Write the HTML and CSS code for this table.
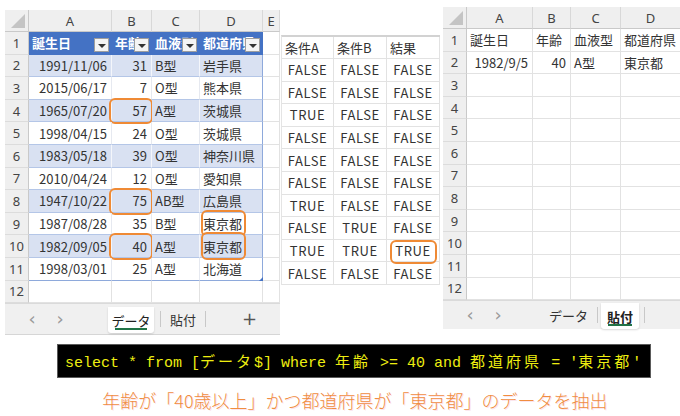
FILE: index.html
```html
<!DOCTYPE html>
<html lang="ja">
<head>
<meta charset="utf-8">
<title>Excel SQL</title>
<link rel="stylesheet" href="styles.css">
</head>
<body>
<div class="top">
  <div class="book book-left">
    <div class="grid grid-left">
      <div class="ch corner"><span class="tri"></span></div>
      <div class="ch">A</div><div class="ch">B</div><div class="ch">C</div><div class="ch">D</div><div class="ch">E</div>

      <div class="rh">1</div>
      <div class="c th">誕生日<span class="fb"></span></div>
      <div class="c th">年齢<span class="fb"></span></div>
      <div class="c th">血液型<span class="fb"></span></div>
      <div class="c th last">都道府県<span class="fb"></span></div>
      <div class="c"></div>

      <div class="rh">2</div>
      <div class="c t band r">1991/11/06</div><div class="c t band r">31</div><div class="c t band">B型</div><div class="c t band last">岩手県</div><div class="c"></div>
      <div class="rh">3</div>
      <div class="c t r">2015/06/17</div><div class="c t r">7</div><div class="c t">O型</div><div class="c t last">熊本県</div><div class="c"></div>
      <div class="rh">4</div>
      <div class="c t band r">1965/07/20</div><div class="c t band r">57<span class="mark mark-cell"></span></div><div class="c t band">A型</div><div class="c t band last">茨城県</div><div class="c"></div>
      <div class="rh">5</div>
      <div class="c t r">1998/04/15</div><div class="c t r">24</div><div class="c t">O型</div><div class="c t last">茨城県</div><div class="c"></div>
      <div class="rh">6</div>
      <div class="c t band r">1983/05/18</div><div class="c t band r">39</div><div class="c t band">O型</div><div class="c t band last">神奈川県</div><div class="c"></div>
      <div class="rh">7</div>
      <div class="c t r">2010/04/24</div><div class="c t r">12</div><div class="c t">O型</div><div class="c t last">愛知県</div><div class="c"></div>
      <div class="rh">8</div>
      <div class="c t band r">1947/10/22</div><div class="c t band r">75<span class="mark mark-cell"></span></div><div class="c t band">AB型</div><div class="c t band last">広島県</div><div class="c"></div>
      <div class="rh">9</div>
      <div class="c t r">1987/08/28</div><div class="c t r">35</div><div class="c t">B型</div><div class="c t last">東京都<span class="mark mark-text"></span></div><div class="c"></div>
      <div class="rh">10</div>
      <div class="c t band r">1982/09/05</div><div class="c t band r">40<span class="mark mark-cell"></span></div><div class="c t band">A型</div><div class="c t band last">東京都<span class="mark mark-text"></span></div><div class="c"></div>
      <div class="rh">11</div>
      <div class="c t r bot">1998/03/01</div><div class="c t r bot">25</div><div class="c t bot">A型</div><div class="c t last bot">北海道<span class="handle"></span></div><div class="c"></div>
      <div class="rh">12</div>
      <div class="c"></div><div class="c"></div><div class="c"></div><div class="c"></div><div class="c"></div>
    </div>
    <div class="tabs tabs-left">
      <span class="arr a1">&lsaquo;</span>
      <span class="arr a2">&rsaquo;</span>
      <span class="tab active l-active">データ</span>
      <span class="sep s1"></span>
      <span class="tab l-second">貼付</span>
      <span class="sep s2"></span>
      <span class="plus">+</span>
    </div>
  </div>

  <div class="cond">
    <div class="grid grid-mid">
      <div class="mh">条件A</div><div class="mh">条件B</div><div class="mh">結果</div>
      <div class="v">FALSE</div><div class="v">FALSE</div><div class="v">FALSE</div>
      <div class="v">FALSE</div><div class="v">FALSE</div><div class="v">FALSE</div>
      <div class="v">TRUE</div><div class="v">FALSE</div><div class="v">FALSE</div>
      <div class="v">FALSE</div><div class="v">FALSE</div><div class="v">FALSE</div>
      <div class="v">FALSE</div><div class="v">FALSE</div><div class="v">FALSE</div>
      <div class="v">FALSE</div><div class="v">FALSE</div><div class="v">FALSE</div>
      <div class="v">TRUE</div><div class="v">FALSE</div><div class="v">FALSE</div>
      <div class="v">FALSE</div><div class="v">TRUE</div><div class="v">FALSE</div>
      <div class="v">TRUE</div><div class="v">TRUE</div><div class="v">TRUE<span class="mark mark-mid"></span></div>
      <div class="v">FALSE</div><div class="v">FALSE</div><div class="v">FALSE</div>
    </div>
  </div>

  <div class="book book-right">
    <div class="grid grid-right">
      <div class="ch corner"><span class="tri"></span></div>
      <div class="ch">A</div><div class="ch">B</div><div class="ch">C</div><div class="ch">D</div>
      <div class="rh">1</div>
      <div class="c">誕生日</div><div class="c">年齢</div><div class="c">血液型</div><div class="c">都道府県</div>
      <div class="rh">2</div>
      <div class="c r">1982/9/5</div><div class="c r">40</div><div class="c">A型</div><div class="c">東京都</div>
      <div class="rh">3</div><div class="c"></div><div class="c"></div><div class="c"></div><div class="c"></div>
      <div class="rh">4</div><div class="c"></div><div class="c"></div><div class="c"></div><div class="c"></div>
      <div class="rh">5</div><div class="c"></div><div class="c"></div><div class="c"></div><div class="c"></div>
      <div class="rh">6</div><div class="c"></div><div class="c"></div><div class="c"></div><div class="c"></div>
      <div class="rh">7</div><div class="c"></div><div class="c"></div><div class="c"></div><div class="c"></div>
      <div class="rh">8</div><div class="c"></div><div class="c"></div><div class="c"></div><div class="c"></div>
      <div class="rh">9</div><div class="c"></div><div class="c"></div><div class="c"></div><div class="c"></div>
      <div class="rh">10</div><div class="c"></div><div class="c"></div><div class="c"></div><div class="c"></div>
      <div class="rh">11</div><div class="c"></div><div class="c"></div><div class="c"></div><div class="c"></div>
      <div class="rh">12</div><div class="c"></div><div class="c"></div><div class="c"></div><div class="c"></div>
    </div>
    <div class="tabs tabs-right">
      <span class="arr a1">&lsaquo;</span>
      <span class="arr a2">&rsaquo;</span>
      <span class="tab r-first">データ</span>
      <span class="sep s3"></span>
      <span class="tab active r-active">貼付</span>
      <span class="sep s4"></span>
    </div>
  </div>
</div>

<div class="code">select * from [<span class="w">データ</span>$] where <span class="w">年齢</span> &gt;= 40 and <span class="w">都道府県</span> = '<span class="w">東京都</span>'</div>

<p class="caption">年齢が「40歳以上」かつ都道府県が「東京都」のデータを抽出</p>
</body>
</html>
```

FILE: styles.css
```css
* { box-sizing: border-box; }

html, body {
  margin: 0;
  padding: 0;
  background: #ffffff;
}

body {
  width: 680px;
  height: 416px;
  overflow: hidden;
  font-family: "Noto Sans CJK JP", "Noto Sans", sans-serif;
  font-size: 13px;
  color: #333;
}

.top {
  display: flex;
  align-items: flex-start;
  height: 335px;
}

/* ---------- spreadsheet books ---------- */
.book {
  display: flex;
  flex-direction: column;
  background: #fff;
}

.book-left {
  margin-left: 5px;
  margin-top: 10px;
  width: 275px;
}

.book-right {
  margin-left: 3px;
  margin-top: 7px;
  width: 238px;
}

.grid {
  display: grid;
}

.grid-left {
  grid-template-columns: 24px 83px 40px 48px 63px 17px;
  grid-template-rows: 22px repeat(12, 22.6px);
}

.grid-right {
  grid-template-columns: 24px 66px 38px 50px 60px;
  grid-template-rows: 22px repeat(12, 22.6px);
}

.ch {
  background: #efefef;
  color: #444;
  font-family: "Noto Sans", "Noto Sans CJK JP", sans-serif;
  font-size: 13px;
  display: flex;
  align-items: center;
  justify-content: center;
  border-right: 1px solid #d8d8d8;
  border-bottom: 1px solid #c9c9c9;
}

.corner {
  position: relative;
  border-right: 1px solid #c9c9c9;
}

.tri {
  position: absolute;
  right: 3px;
  bottom: 3px;
  width: 0;
  height: 0;
  border-left: 14px solid transparent;
  border-bottom: 14px solid #c4c4c4;
}

.rh {
  background: #efefef;
  color: #444;
  font-family: "Noto Sans", "Noto Sans CJK JP", sans-serif;
  font-size: 13px;
  display: flex;
  align-items: center;
  justify-content: center;
  border-right: 1px solid #c9c9c9;
  border-bottom: 1px solid #dcdcdc;
}

.c {
  position: relative;
  display: flex;
  align-items: center;
  padding: 0 3px;
  white-space: nowrap;
  border-right: 1px solid #e2e2e2;
  border-bottom: 1px solid #e2e2e2;
  color: #333;
}

.c.r {
  justify-content: flex-end;
  padding-right: 4px;
}

/* table styling */
.th {
  background: #4472c4;
  color: #fff;
  font-weight: bold;
  overflow: hidden;
  border-right: 1px solid #4472c4;
  border-bottom: 1px solid #4472c4;
}

.t {
  border-right: 1px solid #e6e9f0;
  border-bottom: 1px solid #b4c6e7;
}

.band {
  background: #d9e1f2;
  border-right: 1px solid #f4f6fb;
}

.t.last,
.th.last {
  border-right: 1px solid #8ea9db;
}

.th.last { border-right-color: #4472c4; }

.t.bot {
  border-bottom: 1px solid #8ea9db;
}

.fb {
  position: absolute;
  right: 2px;
  bottom: 2px;
  width: 15px;
  height: 14px;
  background: #f4f4f4;
  border: 1px solid #9e9e9e;
}

.fb::after {
  content: "";
  position: absolute;
  left: 3px;
  top: 5px;
  border-left: 4px solid transparent;
  border-right: 4px solid transparent;
  border-top: 4px solid #333;
}

.handle {
  position: absolute;
  right: -1px;
  bottom: -1px;
  width: 0;
  height: 0;
  border-left: 4px solid transparent;
  border-bottom: 4px solid #4472c4;
}

/* orange highlight boxes */
.mark {
  position: absolute;
  border: 2px solid #ef8a35;
  border-radius: 6px;
  pointer-events: none;
}

.mark-cell {
  left: -3px;
  right: -2px;
  top: -2px;
  bottom: -3px;
}

.mark-text {
  left: 1px;
  width: 45px;
  top: -3px;
  bottom: -3px;
}

.mark-mid {
  left: 3px;
  right: 2px;
  top: 0;
  bottom: -3px;
}

/* ---------- sheet tabs ---------- */
.tabs {
  display: flex;
  align-items: center;
  background: #f0f0f0;
  border-top: 1px solid #dadada;
  color: #333;
  font-size: 13px;
}

.tabs-left {
  height: 32px;
  border-bottom: 1px solid #d6d6d6;
}

.tabs-right {
  height: 29px;
}

.arr {
  width: 14px;
  text-align: center;
  color: #9a9a9a;
  font-family: "DejaVu Sans", sans-serif;
  font-size: 18px;
  line-height: 1;
}

.a1 { margin-left: 20px; }
.a2 { margin-left: 14px; }

.tab {
  display: flex;
  align-items: center;
  justify-content: center;
  color: #333;
}

.active {
  position: relative;
  background: #fff;
  height: 26px;
  margin-top: 2px;
  border-radius: 0 0 3px 3px;
  box-shadow: 0 1px 2px rgba(0, 0, 0, 0.15);
  color: #222;
}

.active::after {
  content: "";
  position: absolute;
  left: 7px;
  right: 7px;
  bottom: 3px;
  height: 2px;
  background: #217346;
}

.l-active { margin-left: 41px; width: 46px; }
.l-second { margin-left: 9px; width: 26px; }
.r-first { margin-left: 44px; width: 39px; }
.r-active { margin-left: 3px; width: 38px; font-weight: bold; }

.sep {
  width: 1px;
  height: 16px;
  background: #c8c8c8;
}

.s1 { margin-left: 6px; }
.s2 { margin-left: 9px; }
.s3 { margin-left: 9px; }
.s4 { margin-left: 5px; }

.plus {
  margin-left: 36px;
  width: 14px;
  text-align: center;
  font-size: 18px;
  color: #555;
  font-family: "DejaVu Sans", sans-serif;
  line-height: 1;
}

/* ---------- middle condition table ---------- */
.cond {
  margin-left: 1px;
  margin-top: 35px;
}

.grid-mid {
  grid-template-columns: 52px 53px 53px;
  grid-template-rows: 22px repeat(10, 22.6px);
  border-top: 2px solid #d2d2d2;
  border-left: 1px solid #e4e4e4;
}

.mh {
  display: flex;
  align-items: center;
  padding-left: 3px;
  border-right: 1px solid #e2e2e2;
  border-bottom: 1px solid #e2e2e2;
  color: #333;
}

.v {
  position: relative;
  display: flex;
  align-items: center;
  justify-content: center;
  letter-spacing: 0.6px;
  border-right: 1px solid #e2e2e2;
  border-bottom: 1px solid #e2e2e2;
  color: #333;
}

/* ---------- SQL line and caption ---------- */
.code {
  margin: 9px 0 0 57px;
  width: 594px;
  height: 34px;
  background: #000;
  border: 1px solid #5a5a5a;
  color: #eeee10;
  font-family: "Liberation Mono", "Noto Sans CJK JP", monospace;
  font-size: 15px;
  line-height: 32px;
  padding-left: 7px;
  white-space: pre;
}

.code .w {
  font-family: "Noto Sans CJK JP", sans-serif;
  letter-spacing: 3px;
}

.caption {
  margin: 10px 0 0 0;
  text-align: center;
  padding-left: 30px;
  font-size: 18px;
  font-weight: 300;
  line-height: 24px;
  color: #f08d40;
  text-shadow: 1px 1px 0 rgba(240, 160, 190, 0.3);
}
```
